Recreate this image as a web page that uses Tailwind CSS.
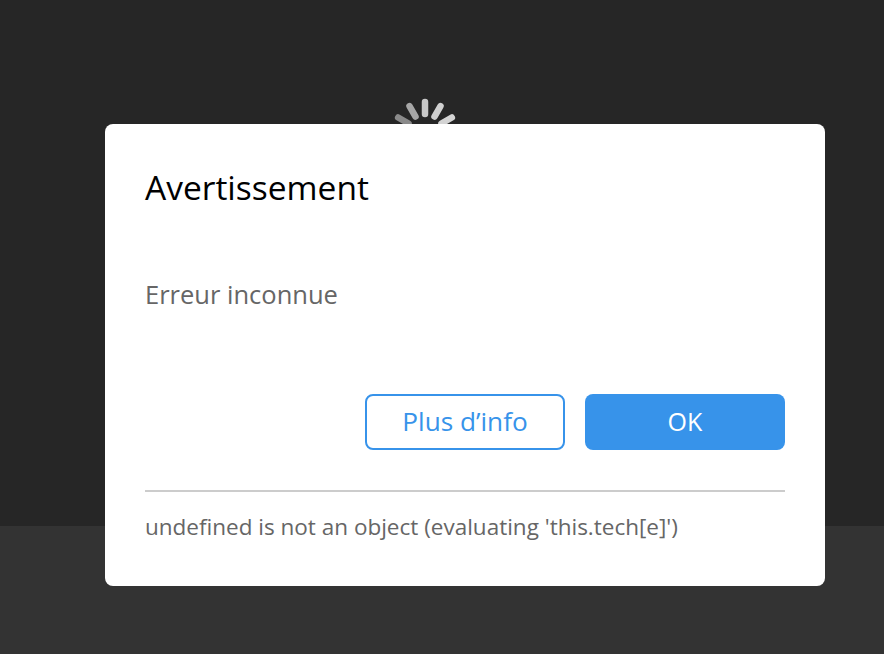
<!DOCTYPE html>
<html lang="fr">

<head>
    <meta charset="UTF-8">
    <meta name="viewport" content="width=device-width, initial-scale=1.0">
    <title>Avertissement</title>
    <script src="https://cdn.jsdelivr.net/npm/@tailwindcss/browser@4"></script>
</head>

<body class="relative h-[654px] w-[884px] overflow-hidden bg-[#333333] font-['Open_Sans','Noto_Sans',sans-serif]">
    <!-- player background -->
    <div class="h-[526px] bg-[#262626]"></div>

    <!-- spinner, mostly hidden by the dialog -->
    <svg class="absolute left-[385px] top-[93px] h-20 w-20" viewBox="0 0 80 80" fill="none" stroke-width="6.5" stroke-linecap="round">
        <g transform="translate(40 40)">
            <line x1="0" y1="-19" x2="0" y2="-31" stroke="#c8c8c8" />
            <line x1="0" y1="-19" x2="0" y2="-31" stroke="#cfcfcf" transform="rotate(30)" />
            <line x1="0" y1="-19" x2="0" y2="-31" stroke="#d4d4d4" transform="rotate(60)" />
            <line x1="0" y1="-19" x2="0" y2="-31" stroke="#a6a6a6" transform="rotate(-30)" />
            <line x1="0" y1="-19" x2="0" y2="-31" stroke="#8a8a8a" transform="rotate(-60)" />
        </g>
    </svg>

    <!-- dialog -->
    <div class="absolute left-[105px] top-[124px] flex h-[462px] w-[720px] flex-col rounded-lg bg-white px-10">
        <h2 class="mt-[39px] h-[48px] text-[33.5px] leading-[48px] text-black">Avertissement</h2>
        <p class="mt-[65px] h-[36px] text-[25.5px] leading-[36px] text-[#666666]">Erreur inconnue</p>
        <div class="mt-[82px] flex justify-end gap-5">
            <button class="h-14 w-[200px] rounded-lg border-2 border-[#3793ea] text-[26.2px] text-[#3793ea]">Plus d’info</button>
            <button class="h-14 w-[200px] rounded-lg bg-[#3793ea] text-[25px] text-white">OK</button>
        </div>
        <div class="mt-10 border-t-2 border-[#cccccc] pt-[18px]">
            <p class="text-[22.5px] leading-[34px] text-[#666666]">undefined is not an object (evaluating 'this.tech[e]')</p>
        </div>
    </div>
</body>

</html>
